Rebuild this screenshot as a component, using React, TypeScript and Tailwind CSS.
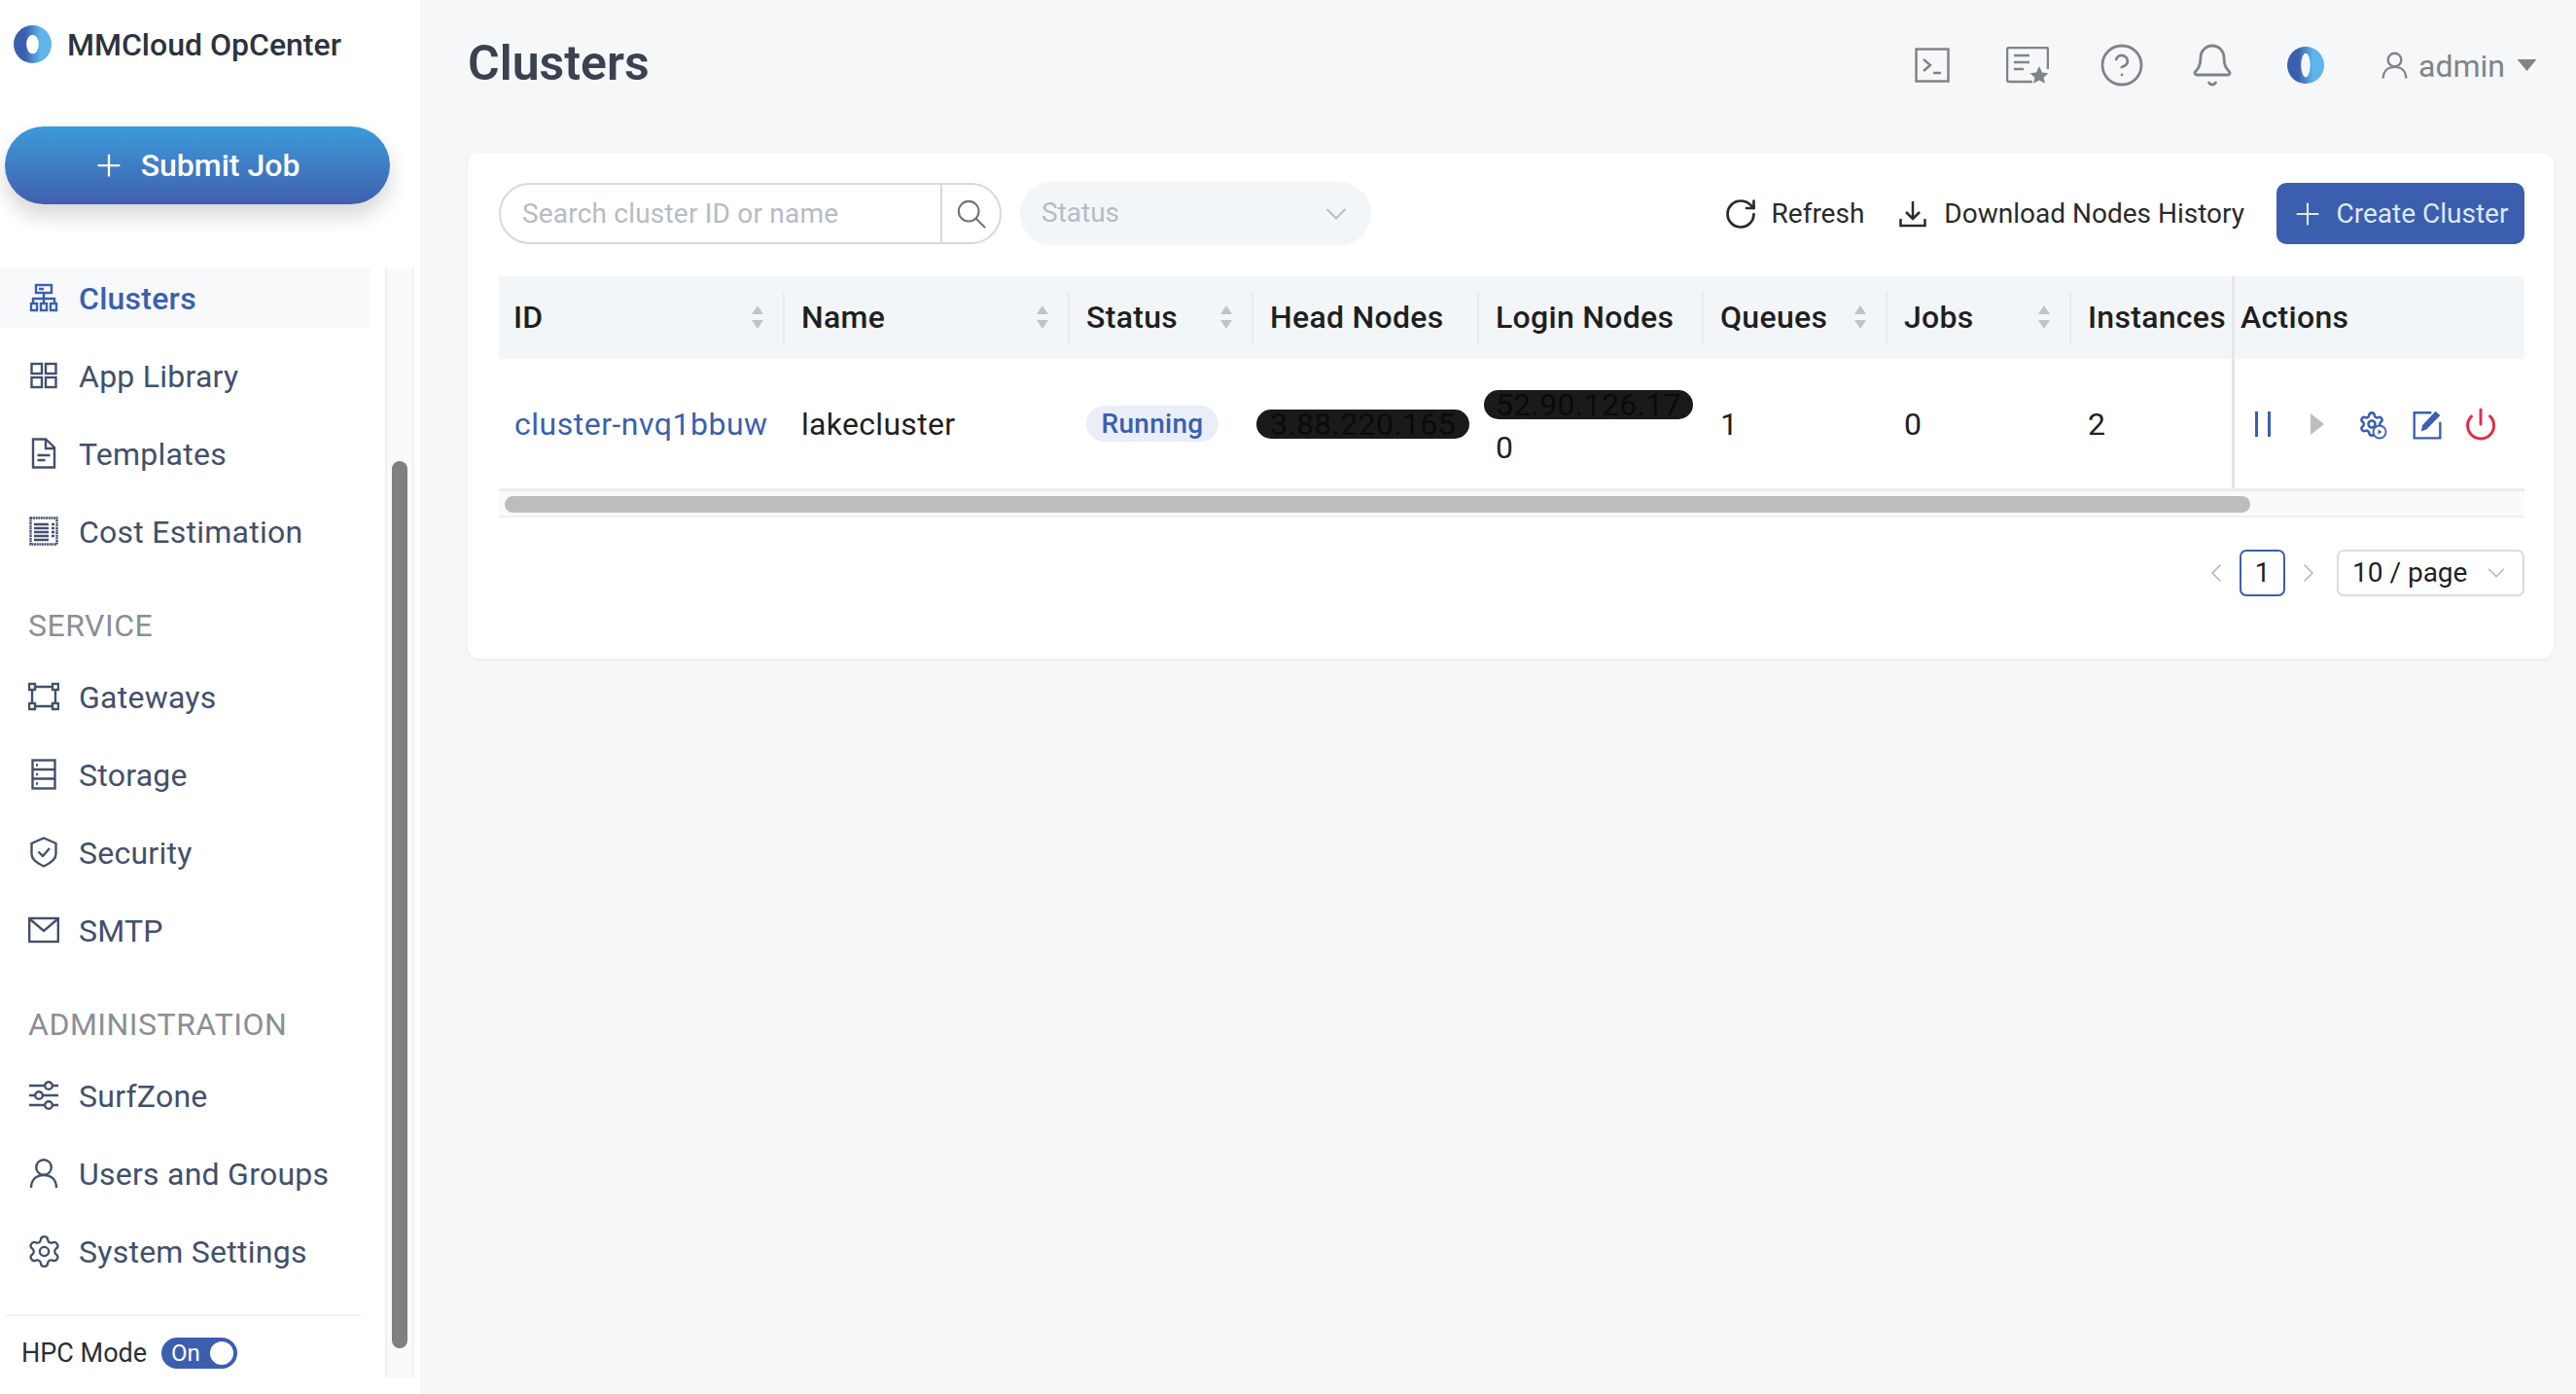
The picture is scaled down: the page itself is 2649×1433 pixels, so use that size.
import React from 'react';
import { Settings, Power, ChevronDown, ChevronLeft, ChevronRight, RotateCw, Plus, Bell, CircleHelp } from 'lucide-react';

const Logo = ({ inner = 'wide' }: { inner?: 'wide' | 'thin' }) => (
  <svg viewBox="0 0 40 40" className="w-full h-full">
    <defs>
      <linearGradient id="logoGrad" x1="0" y1="0" x2="1" y2="0">
        <stop offset="0.3" stopColor="#3b5fae" />
        <stop offset="0.7" stopColor="#5db5ea" />
      </linearGradient>
    </defs>
    <circle cx="20" cy="20" r="20" fill="url(#logoGrad)" />
    {inner === 'wide' ? <ellipse cx="20" cy="20" rx="6.5" ry="10" fill="#fff" /> : <ellipse cx="20" cy="20" rx="5" ry="13" fill="#f4f6f8" />}
  </svg>
);

const NavSvg = ({ children }: { children: React.ReactNode }) => (
  <svg viewBox="0 0 32 32" fill="none" stroke="currentColor" strokeWidth="2.400" className="w-[32px] h-[32px]">
    {children}
  </svg>
);

const navIcons: Record<string, React.ReactNode> = {
  clusters: (
    <NavSvg>
      <rect x="8" y="3" width="16" height="8" />
      <path d="M11 7h5M16 11v6M5 22v-5h22v5M16 17v5" />
      <rect x="3" y="22" width="6" height="7" />
      <rect x="13" y="22" width="6" height="7" />
      <rect x="23" y="22" width="6" height="7" />
    </NavSvg>
  ),
  apps: (
    <NavSvg>
      <rect x="3.500" y="4" width="10.500" height="10" />
      <rect x="18" y="4" width="10.500" height="10" />
      <rect x="3.500" y="18" width="10.500" height="10" />
      <rect x="18" y="18" width="10.500" height="10" />
    </NavSvg>
  ),
  templates: (
    <NavSvg>
      <path d="M5 1.500h13l9 8.500v20.500H5z" />
      <path d="M18 1.500V11h9M9.500 18h13M9.500 23h8" />
    </NavSvg>
  ),
  cost: (
    <NavSvg>
      <rect x="2.500" y="2.500" width="27" height="27" strokeDasharray="2 0.6" />
      <path d="M6 9h15M6 13h15M6 17h15M6 21h15M6 25h15M24 9h3M24 13h3M24 17h3M24 21h3" />
    </NavSvg>
  ),
  gateways: (
    <NavSvg>
      <rect x="1" y="3" width="6" height="6" />
      <rect x="25" y="3" width="6" height="6" />
      <rect x="1" y="23" width="6" height="6" />
      <rect x="25" y="23" width="6" height="6" />
      <path d="M7 6h18M7 26h18M4 9v14M28 9v14" />
    </NavSvg>
  ),
  storage: (
    <NavSvg>
      <rect x="4.500" y="1.500" width="23" height="29" />
      <path d="M4.500 11h23M4.500 20.500h23M8 6.500h2M8 16h2M8 25.500h2" />
    </NavSvg>
  ),
  security: (
    <NavSvg>
      <path d="M16 1.500L28.500 7v11c0 5-6 9.500-12.500 12.500C9.500 27.500 3.500 23 3.500 18V7z" />
      <path d="M10.500 15.500l4.500 4.500L22 12" />
    </NavSvg>
  ),
  smtp: (
    <NavSvg>
      <rect x="1.200" y="4" width="29.600" height="24" />
      <path d="M2 5l14 12L30 5" />
    </NavSvg>
  ),
  surfzone: (
    <NavSvg>
      <path d="M1 6h16M25 6h6M1 16h6M15 16h16M1 26h16M25 26h6" />
      <circle cx="21" cy="6" r="3.800" />
      <circle cx="11" cy="16" r="3.800" />
      <circle cx="21" cy="26" r="3.800" />
    </NavSvg>
  ),
  users: (
    <NavSvg>
      <circle cx="16" cy="10" r="7.800" />
      <path d="M3 31c0-8 5-13 13-13s13 5 13 13" />
    </NavSvg>
  ),
};

const NavItem = ({ icon, label, active }: { icon: React.ReactNode; label: string; active?: boolean }) => (
  <div className={`flex items-center shrink-0 h-[62px] w-[380px] mb-[18px] pl-[29px] gap-[20px] tracking-[0.25px] ${active ? 'bg-[#f7f9fb] text-[#3b5fae] font-medium' : 'text-[#42506b]'}`}>
    <span className="w-[32px] flex justify-center">{icon}</span>
    <span className="pt-[2px]">{label}</span>
  </div>
);

const SectionTitle = ({ label }: { label: string }) => (
  <div className="shrink-0 h-[44px] pl-[29px] flex items-center text-[#8b8f96] tracking-[0.5px] mt-[26px] mb-[20px]">{label}</div>
);

const SortArrows = () => (
  <svg viewBox="0 0 14 26" className="w-[14px] h-[26px] shrink-0" fill="#bfc3c8">
    <path d="M7 1l6 9H1zM7 25l-6-9h12z" />
  </svg>
);

const HeadCell = ({ label, sort, last, first }: { label: string; sort?: boolean; last?: boolean; first?: boolean }) => (
  <div className="flex items-center h-full">
    <div className={`flex-1 h-[54px] flex items-center justify-between ${first ? 'pl-[15px]' : 'pl-[17px]'} pr-[19px] pb-[2px] whitespace-nowrap ${last ? '' : 'border-r-2 border-[#e8ebef]'}`}>
      <span>{label}</span>
      {sort && <SortArrows />}
    </div>
  </div>
);

const BodyCell = ({ children }: { children: React.ReactNode }) => (
  <div className="flex items-center pl-[17px] whitespace-nowrap">{children}</div>
);

const Redacted = ({ children }: { children: React.ReactNode }) => (
  <span className="inline-flex items-center h-[30px] rounded-full bg-[#1a1a1a] text-[#0a0a0a] leading-none">{children}</span>
);

export default function App() {
  return (
    <div className="flex w-[2649px] h-[1433px] overflow-hidden bg-[#f5f7f9] font-[family-name:Roboto,sans-serif] text-[32px] text-[#1f1f1f]">
      {/* sidebar */}
      <aside className="w-[432px] shrink-0 bg-white flex flex-col pb-[17px]">
        <div className="flex items-center h-[39px] mt-[26px] pl-[14px] gap-[16px]">
          <div className="w-[39px] h-[39px]"><Logo /></div>
          <span className="font-medium text-[#2b3340]">MMCloud OpCenter</span>
        </div>
        <button className="mt-[65px] ml-[5px] w-[396px] h-[80px] rounded-full bg-gradient-to-b from-[#3a9bdb] to-[#3f60ad] shadow-[0_12px_22px_rgba(0,0,0,0.16)] flex items-center justify-center gap-[15px] pr-[4px] text-white font-medium">
          <Plus size={36} strokeWidth={1.5} />
          Submit Job
        </button>
        <div className="flex flex-1 mt-[65px] min-h-0">
          <nav className="w-[396px] shrink-0 flex flex-col">
            <NavItem icon={navIcons.clusters} label="Clusters" active />
            <NavItem icon={navIcons.apps} label="App Library" />
            <NavItem icon={navIcons.templates} label="Templates" />
            <NavItem icon={navIcons.cost} label="Cost Estimation" />
            <SectionTitle label="SERVICE" />
            <NavItem icon={navIcons.gateways} label="Gateways" />
            <NavItem icon={navIcons.storage} label="Storage" />
            <NavItem icon={navIcons.security} label="Security" />
            <NavItem icon={navIcons.smtp} label="SMTP" />
            <SectionTitle label="ADMINISTRATION" />
            <NavItem icon={navIcons.surfzone} label="SurfZone" />
            <NavItem icon={navIcons.users} label="Users and Groups" />
            <NavItem icon={<Settings size={37} strokeWidth={1.5} className="shrink-0" />} label="System Settings" />
            <div className="shrink-0 mt-[16px] w-[365px] ml-[6px] border-t-2 border-[#f1f3f5]" />
            <div className="shrink-0 flex items-center gap-[15px] pl-[22px] h-[76px] text-[27px] text-[#2b2f36]">
              HPC Mode
              <div className="w-[78px] h-[32px] rounded-full bg-[#3b5fae] flex items-center justify-between pl-[10px] pr-[4px] text-white text-[24px]">
                On
                <span className="w-[24px] h-[24px] rounded-full bg-white" />
              </div>
            </div>
          </nav>
          <div className="w-[30px] shrink-0 bg-[#fafafa] border-x-2 border-[#f0f0f0] pt-[199px] flex justify-center">
            <div className="w-[16px] h-[912px] rounded-full bg-[#808080]" />
          </div>
        </div>
      </aside>

      {/* main */}
      <main className="flex-1 pl-[49px] pr-[23px] min-w-0">
        <header className="h-[157px] flex items-start justify-between pt-[38px]">
          <h1 className="font-semibold text-[50px] leading-[54px] text-[#3a4250]">Clusters</h1>
          <div className="flex items-center text-[#808387] h-[40px] mt-[9px] pr-[17px]">
            <svg viewBox="0 0 36 36" fill="none" stroke="currentColor" strokeWidth="2.500" className="w-[36px] h-[36px]">
              <rect x="1.500" y="1.500" width="33" height="33" />
              <path d="M9 12l7 6-7 6M19 26h8" />
            </svg>
            <svg viewBox="0 0 44 38" fill="none" stroke="currentColor" strokeWidth="2.500" className="w-[44px] h-[38px] ml-[58px]">
              <path d="M27 36H3a2 2 0 0 1-2-2V3a2 2 0 0 1 2-2h38a2 2 0 0 1 2 2v20" />
              <path d="M8 9h16M8 16h16M8 23h10" />
              <path d="M34 20l3 6.500 6.500.8-5 4.500 1.500 6-6-3.300-6 3.300 1.500-6-5-4.500 6.500-.8z" fill="currentColor" stroke="none" />
            </svg>
            <CircleHelp size={48} strokeWidth={1.4} className="ml-[51px]" />
            <Bell size={48} strokeWidth={1.4} className="ml-[45px]" />
            <div className="w-[38px] h-[38px] ml-[53px]"><Logo inner="thin" /></div>
            <svg viewBox="0 0 32 32" fill="none" stroke="currentColor" strokeWidth="2.600" className="w-[29px] h-[30px] ml-[58px]">
              <circle cx="16" cy="10" r="7.500" />
              <path d="M3 31c0-8 5-13 13-13s13 5 13 13" />
            </svg>
            <span className="ml-[10px] pt-[2px]">admin</span>
            <svg viewBox="0 0 20 12" className="w-[21px] h-[12px] ml-[12px]" fill="currentColor"><path d="M0 0h20L10 12z" /></svg>
          </div>
        </header>

        <section className="h-[520px] bg-white rounded-[12px] shadow-[0_1px_4px_rgba(0,0,0,0.06)] pt-[31px] pl-[32px] pr-[30px]">
          {/* toolbar */}
          <div className="flex items-center justify-between h-[63px] text-[28px]">
            <div className="flex items-center gap-[19px]">
              <div className="flex items-center w-[517px] h-[63px] rounded-full border-2 border-[#d9d9d9]">
                <span className="flex-1 pl-[22px] text-[#b7bbc2] tracking-[0.2px]">Search cluster ID or name</span>
                <div className="w-[61px] h-full border-l-2 border-[#d9d9d9] flex items-center justify-center text-[#6f7378]">
                  <svg viewBox="0 0 32 32" fill="none" stroke="currentColor" strokeWidth="2.200" className="w-[30px] h-[30px]">
                    <circle cx="13" cy="13" r="11" />
                    <path d="M21 21l10 10" />
                  </svg>
                </div>
              </div>
              <div className="flex items-center justify-between w-[361px] h-[65px] rounded-full bg-[#f3f6f9] pl-[22px] pr-[18px] text-[#b7bbc2]">
                <span className="mb-[2px]">Status</span>
                <ChevronDown size={36} strokeWidth={1.2} />
              </div>
            </div>
            <div className="flex items-center text-[#2a2a2a]">
              <RotateCw size={36} strokeWidth={1.8} />
              <span className="ml-[14px]">Refresh</span>
              <svg viewBox="0 0 28 28" fill="none" stroke="currentColor" strokeWidth="2.500" className="w-[28px] h-[28px] ml-[36px]">
                <path d="M14 1v17M7 12l7 7 7-7M1.500 19v7h25v-7" />
              </svg>
              <span className="ml-[18px]">Download Nodes History</span>
              <button className="flex items-center justify-center gap-[12px] w-[255px] h-[63px] ml-[33px] pr-[3px] rounded-[10px] bg-[#3b5fae] text-[#dfe8f7]">
                <Plus size={36} strokeWidth={1.4} />
                Create Cluster
              </button>
            </div>
          </div>

          {/* table */}
          <div className="mt-[33px] tracking-[0.3px]">
            <div className="grid grid-cols-[294px_293px_189px_232px_231px_189px_189px_165px_301px] h-[85px] bg-[#f3f6f9] font-medium">
              <HeadCell label="ID" sort first />
              <HeadCell label="Name" sort />
              <HeadCell label="Status" sort />
              <HeadCell label="Head Nodes" />
              <HeadCell label="Login Nodes" />
              <HeadCell label="Queues" sort />
              <HeadCell label="Jobs" sort />
              <HeadCell label="Instances" last />
              <div className="flex items-center pl-[6px] pb-[2px] border-l-[3px] border-[#e4e6e9] whitespace-nowrap">Actions</div>
            </div>
            <div className="grid grid-cols-[294px_293px_189px_232px_231px_189px_189px_165px_301px] h-[136px] border-b-[3px] border-[#ececee]">
              <BodyCell><span className="text-[#3b5fae] ml-[-1px] tracking-[0.5px]">cluster-nvq1bbuw</span></BodyCell>
              <BodyCell>lakecluster</BodyCell>
              <BodyCell>
                <span className="flex items-center justify-center w-[136px] h-[37px] rounded-full bg-[#eaeef8] text-[#3b5fae] text-[28px] font-medium">Running</span>
              </BodyCell>
              <div className="flex items-center pl-[3px] whitespace-nowrap">
                <Redacted><span className="px-[14px]">3.88.220.165</span></Redacted>
              </div>
              <div className="flex flex-col items-start justify-center pl-[5px] pt-[7px] whitespace-nowrap">
                <Redacted><span className="px-[12px]">52.90.126.17</span></Redacted>
                <span className="pl-[12px] mt-[11px] leading-[36px]">0</span>
              </div>
              <BodyCell>1</BodyCell>
              <BodyCell>0</BodyCell>
              <BodyCell>2</BodyCell>
              <div className="flex items-center pl-[21px] border-l-[3px] border-[#e4e6e9]">
                <svg viewBox="0 0 16 26" className="w-[16px] h-[26px]" fill="#3b5fae"><rect x="0" y="0" width="3" height="26" /><rect x="13" y="0" width="3" height="26" /></svg>
                <svg viewBox="0 0 14 22" className="w-[14px] h-[22px] ml-[41px]" fill="#bdbdbd"><path d="M0 0l14 11L0 22z" /></svg>
                <span className="relative ml-[35px] w-[28px] h-[28px] text-[#3b5fae]">
                  <Settings size={28} strokeWidth={2.200} />
                  <svg viewBox="0 0 16 16" className="absolute right-[-2px] bottom-[-2px] w-[16px] h-[16px]" fill="#fff" stroke="#3b5fae" strokeWidth="1.800">
                    <circle cx="8" cy="8" r="6.500" />
                    <path d="M6.500 5.500l4 2.500-4 2.500z" fill="#3b5fae" stroke="none" />
                  </svg>
                </span>
                <svg viewBox="0 0 28 30" fill="none" stroke="#3b5fae" strokeWidth="2.200" className="w-[30px] h-[32px] ml-[28px]">
                  <path d="M18 4H1.500v24.500h25V13" />
                  <path d="M8 22l1.500-6L22 2.500l4.500 4L13.500 20z" fill="#3b5fae" stroke="none" />
                </svg>
                <Power size={36} strokeWidth={2} color="#dc2f4a" className="ml-[22px]" />
              </div>
            </div>
            <div className="h-[27px] bg-[#fafafa] border-b-2 border-[#efefef] pt-[5px] pl-[6px]">
              <div className="w-[1795px] h-[17px] rounded-full bg-[#bdbdbd]" />
            </div>
          </div>

          {/* pagination */}
          <div className="flex items-center justify-end mt-[33px] text-[28px]">
            <ChevronLeft size={32} strokeWidth={1.2} className="text-[#b5b5b5]" />
            <span className="flex items-center justify-center w-[47px] h-[48px] ml-[8px] rounded-[7px] border-2 border-[#3b5fae]">1</span>
            <ChevronRight size={32} strokeWidth={1.2} className="text-[#b5b5b5] ml-[8px]" />
            <div className="flex items-center justify-between w-[193px] h-[48px] ml-[13px] rounded-[7px] border-2 border-[#dcdcdc] pl-[14px] pr-[12px]">
              10 / page
              <ChevronDown size={30} strokeWidth={1.1} className="text-[#b5b5b5]" />
            </div>
          </div>
        </section>
      </main>
    </div>
  );
}
